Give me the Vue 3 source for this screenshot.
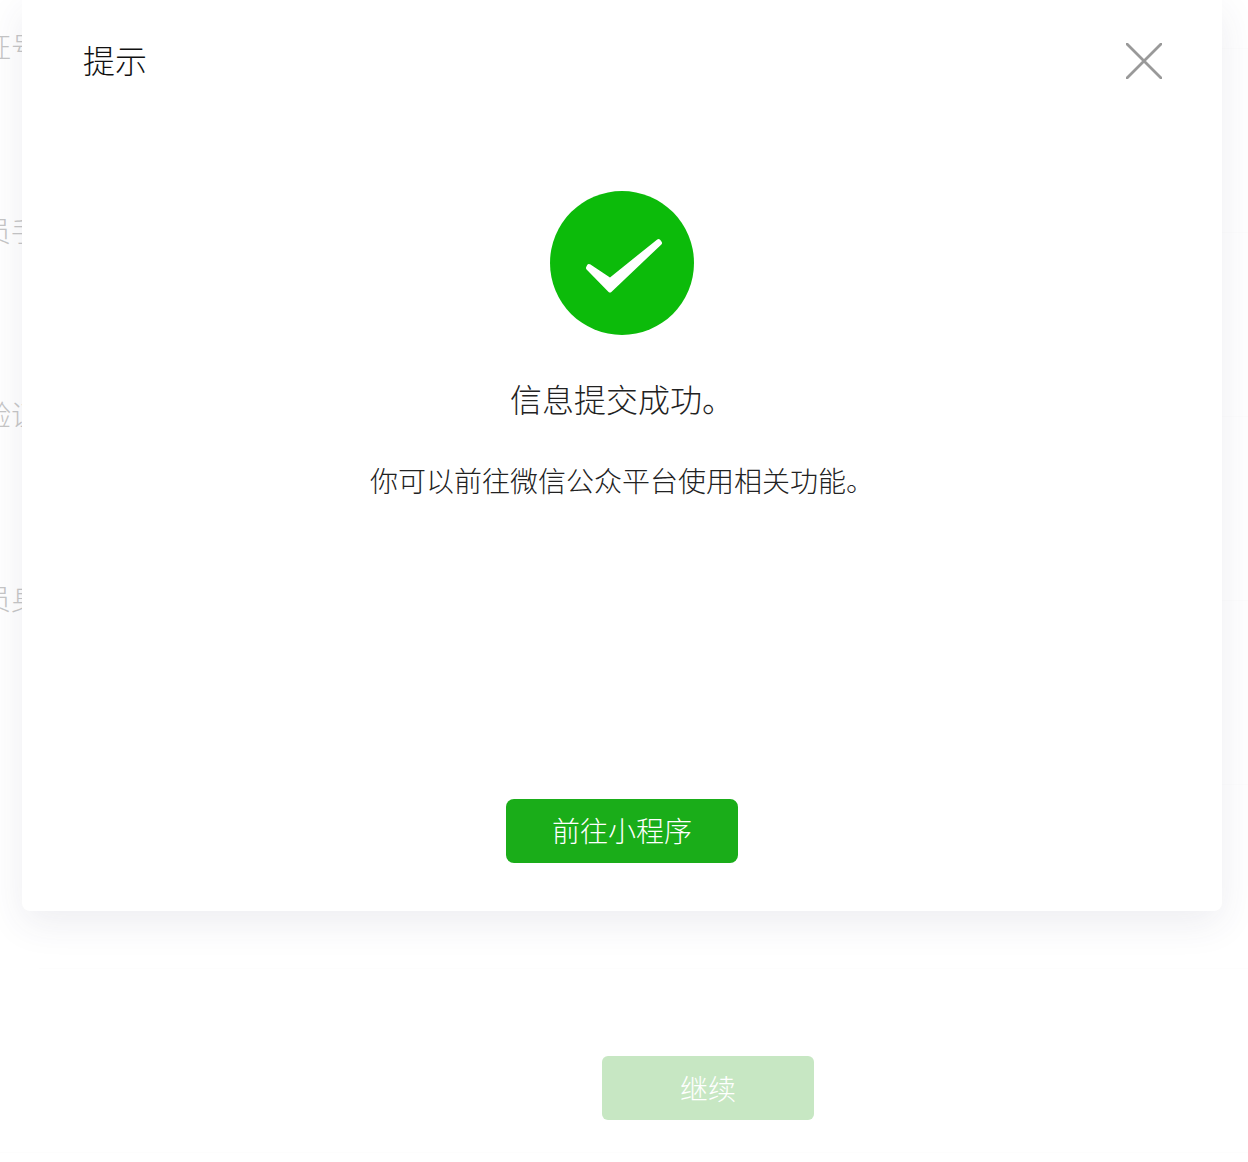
<script setup>
const labels = ['证号', '员手', '验证', '员身', '', '']
const marks = Array.from({ length: 13 }, (_, i) => i)
const cols = [0, 1, 2]
</script>

<template>
  <div class="page">
    <div class="form">
      <div v-for="(label, i) in labels" :key="i" class="row" :class="{ last: i === 5 }">
        <span class="label">{{ label }}</span>
        <span class="rule"></span>
      </div>
      <div class="footer">
        <button class="next" type="button">继续</button>
      </div>
      <div class="end-rule"></div>
    </div>

    <section class="modal">
      <header class="head">
        <h2 class="title">提示</h2>
        <svg class="close" viewBox="0 0 36 36" width="36" height="36" aria-label="关闭">
          <path d="M1 1 L35 35 M35 1 L1 35" fill="none" stroke="#999" stroke-width="2.8" stroke-linecap="round" />
        </svg>
      </header>
      <div class="body">
        <div class="badge">
          <svg viewBox="0 0 144 144" width="144" height="144">
            <path d="M39 75 L60 89 L108.5 50 L110 52 L60 99.5 L38 77 Z" fill="#fff" stroke="#fff" stroke-width="4" stroke-linejoin="round" />
          </svg>
          <span class="tint">wX5q</span>
        </div>
        <p class="headline">信息提交成功。</p>
        <p class="sub">你可以前往微信公众平台使用相关功能。</p>
        <button class="go" type="button"><span class="go-text">前往小程序</span><span class="tint tint-btn">q</span></button>
      </div>
    </section>

    <div class="marks">
      <div v-for="m in marks" :key="m" class="mark-row">
        <span v-for="c in cols" :key="c" class="mark">wX5qTogXhT7</span>
      </div>
    </div>
  </div>
</template>

<style scoped>
.page {
  position: relative;
  width: 1248px;
  height: 1162px;
  overflow: hidden;
  background: #fff;
  font-family: "Noto Sans CJK SC", "Noto Sans", sans-serif;
  font-weight: 300;
}
.form {
  margin-top: -44px;
}
.row {
  height: 184px;
  display: flex;
  align-items: center;
  margin-left: -17px;
  font-size: 28px;
  color: #c6c6c6;
}
.row.last {
  height: 180px;
  align-items: flex-start;
}
.row.last .rule {
  margin-top: 92px;
}
.label {
  flex: none;
  min-width: 56px;
  margin-bottom: 4px;
  white-space: nowrap;
}
.rule {
  flex: 1;
  height: 1px;
  background: #fdfdfd;
}
.footer {
  padding-left: 602px;
}
.next {
  display: block;
  width: 212px;
  height: 64px;
  border: 0;
  border-radius: 6px;
  background: #c7e7c3;
  color: #fff;
  font: inherit;
  font-size: 28px;
  padding: 0;
}
.end-rule {
  margin-top: 32px;
  height: 1px;
  background: #fdfdfd;
}
.modal {
  position: absolute;
  left: 22px;
  top: 0;
  width: 1200px;
  height: 911px;
  background: #fff;
  border-radius: 0 0 8px 8px;
  box-shadow: 0 12px 38px rgba(50, 60, 100, 0.09);
}
.head {
  height: 122px;
  display: flex;
  align-items: center;
  justify-content: space-between;
  padding: 0 60px 0 61px;
}
.title {
  margin: 0 0 5px;
  font-size: 32px;
  line-height: 44px;
  font-weight: 300;
  color: #111;
}
.close {
  display: block;
}
.body {
  display: flex;
  flex-direction: column;
  align-items: center;
  padding-top: 69px;
}
.badge {
  position: relative;
  width: 144px;
  height: 144px;
  border-radius: 50%;
  background: #0cbb0a;
  overflow: hidden;
}
.badge svg {
  display: block;
}
.tint {
  position: absolute;
  left: 78px;
  top: 67px;
  font-family: Roboto, sans-serif;
  font-size: 28px;
  line-height: 40px;
  color: rgba(0, 0, 0, 0.02);
  white-space: nowrap;
}
.headline {
  margin: 41px 0 0;
  font-size: 32px;
  line-height: 44px;
  color: #222;
}
.sub {
  margin: 40px 0 0;
  font-size: 28px;
  line-height: 40px;
  color: #222;
}
.go {
  position: relative;
  margin-top: 299px;
  width: 232px;
  height: 64px;
  border: 0;
  border-radius: 8px;
  background: #1aad19;
  color: #fff;
  font: inherit;
  font-size: 28px;
  padding: 0;
}
.go-text {
  display: block;
  margin-bottom: 2px;
}
.tint-btn {
  left: 206px;
  top: 14px;
}
.marks {
  position: absolute;
  left: -20px;
  top: -43px;
  right: 0;
  pointer-events: none;
}
.mark-row {
  display: flex;
  height: 92px;
  align-items: center;
}
.mark {
  flex: none;
  width: 432px;
  font-family: Roboto, sans-serif;
  font-size: 28px;
  letter-spacing: 0.3px;
  color: rgba(0, 0, 0, 0.022);
  white-space: nowrap;
}
</style>
